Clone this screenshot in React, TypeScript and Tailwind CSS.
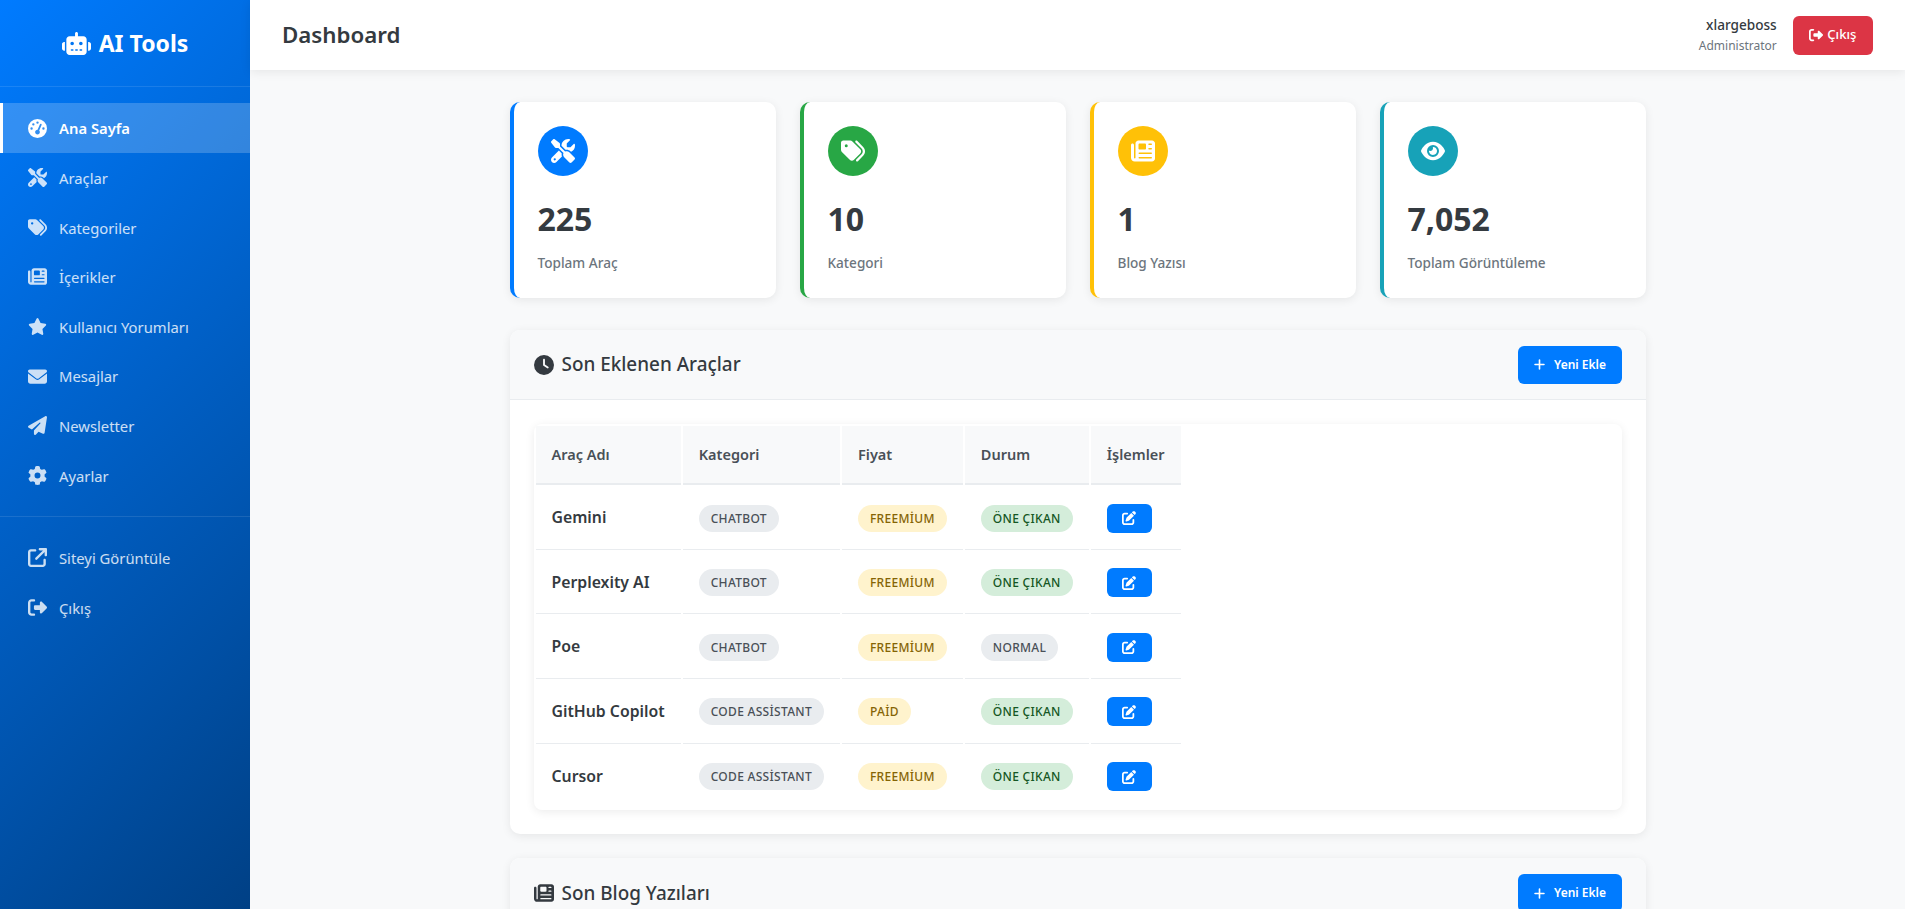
import React from 'react';
import {
  FaRobot, FaGaugeHigh, FaScrewdriverWrench, FaTags, FaNewspaper, FaStar, FaEnvelope, FaPaperPlane,
  FaGear, FaArrowUpRightFromSquare, FaRightFromBracket, FaEye, FaClock, FaPlus, FaPenToSquare,
} from 'react-icons/fa6';

const navItems = [
  { label: 'Ana Sayfa', icon: FaGaugeHigh, active: true },
  { label: 'Araçlar', icon: FaScrewdriverWrench },
  { label: 'Kategoriler', icon: FaTags },
  { label: 'İçerikler', icon: FaNewspaper },
  { label: 'Kullanıcı Yorumları', icon: FaStar },
  { label: 'Mesajlar', icon: FaEnvelope },
  { label: 'Newsletter', icon: FaPaperPlane },
  { label: 'Ayarlar', icon: FaGear },
];

const stats = [
  { value: '225', label: 'Toplam Araç', icon: FaScrewdriverWrench, border: 'border-[#007bff]', bg: 'bg-[#007bff]' },
  { value: '10', label: 'Kategori', icon: FaTags, border: 'border-[#28a745]', bg: 'bg-[#28a745]' },
  { value: '1', label: 'Blog Yazısı', icon: FaNewspaper, border: 'border-[#ffc107]', bg: 'bg-[#ffc107]' },
  { value: '7,052', label: 'Toplam Görüntüleme', icon: FaEye, border: 'border-[#17a2b8]', bg: 'bg-[#17a2b8]' },
];

const tools = [
  { name: 'Gemini', category: 'CHATBOT', price: 'FREEMİUM', status: 'ÖNE ÇIKAN' },
  { name: 'Perplexity AI', category: 'CHATBOT', price: 'FREEMİUM', status: 'ÖNE ÇIKAN' },
  { name: 'Poe', category: 'CHATBOT', price: 'FREEMİUM', status: 'NORMAL' },
  { name: 'GitHub Copilot', category: 'CODE ASSİSTANT', price: 'PAİD', status: 'ÖNE ÇIKAN' },
  { name: 'Cursor', category: 'CODE ASSİSTANT', price: 'FREEMİUM', status: 'ÖNE ÇIKAN' },
];

const NavLink = ({ label, icon: Icon, active }: { label: string; icon: React.ElementType; active?: boolean }) => (
  <a
    className={`flex h-[49.6px] items-center border-l-[3px] px-6 text-[14.8px] ${
      active ? 'border-white bg-white/20 font-semibold text-white' : 'border-transparent text-white/80'
    }`}
  >
    <span className="mr-3 flex w-5 justify-center">
      <Icon size={19} />
    </span>
    <span className="pt-[2px] leading-[23.6px]">{label}</span>
  </a>
);

const Badge = ({ text, tone }: { text: string; tone: string }) => (
  <span className={`inline-block rounded-[20px] px-3 py-[5px] text-[12px] leading-[17px] font-medium tracking-[0.3px] ${tone}`}>
    {text}
  </span>
);

const SectionHeader = ({ title, icon: Icon }: { title: string; icon: React.ElementType }) => (
  <div className="flex items-center justify-between border-b border-[#e9ecef] bg-[#f8f9fa] px-6 pt-4 pb-[15px]">
    <h2 className="flex items-center gap-2 text-[18.9px] leading-[29px] font-medium text-[#343a40]">
      <Icon size={20} />
      {title}
    </h2>
    <button className="flex h-[38px] items-center gap-2 rounded-md bg-[#007bff] px-[15.5px] text-[12px] font-semibold text-white">
      <FaPlus size={13} />
      Yeni Ekle
    </button>
  </div>
);

export default function App() {
  return (
    <div className="flex h-screen overflow-hidden bg-[#f8f9fa] font-['Noto_Sans','Open_Sans',sans-serif] text-[#343a40]">
      {/* Sidebar */}
      <aside className="w-[250px] shrink-0 bg-[linear-gradient(135deg,#007bff,#004085)] text-white">
        <div className="flex items-center justify-center gap-2 border-b border-white/10 p-6 text-[23px] leading-[38.4px] font-bold">
          <FaRobot size={29} />
          AI Tools
        </div>
        <nav className="pt-4">
          {navItems.map((item) => (
            <NavLink key={item.label} {...item} />
          ))}
          <div className="my-4 border-t border-white/10" />
          <NavLink label="Siteyi Görüntüle" icon={FaArrowUpRightFromSquare} />
          <NavLink label="Çıkış" icon={FaRightFromBracket} />
        </nav>
      </aside>

      <div className="min-w-0 flex-1">
        {/* Header */}
        <header className="flex h-[70px] items-center justify-between bg-white px-8 shadow-[0_2px_10px_rgba(0,0,0,0.08)]">
          <h1 className="text-[22.3px] font-semibold text-[#343a40]">Dashboard</h1>
          <div className="flex items-center gap-4">
            <div className="text-right">
              <div className="text-[13.6px] leading-[21px] font-medium">xlargeboss</div>
              <div className="text-[12px] leading-[21px] text-[#6c757d]">Administrator</div>
            </div>
            <button className="flex h-[39px] items-center gap-1 rounded-md bg-[#dc3545] px-[16.5px] text-[13.2px] font-medium text-white">
              <FaRightFromBracket size={14} />
              Çıkış
            </button>
          </div>
        </header>

        <main className="mx-auto max-w-[1200px] p-8">
          {/* Stat cards */}
          <div className="mb-8 grid grid-cols-4 gap-6">
            {stats.map((stat) => (
              <div
                key={stat.label}
                className={`rounded-[10px] border-l-4 bg-white px-6 pt-6 pb-[23px] shadow-[0_2px_10px_rgba(0,0,0,0.08)] ${stat.border}`}
              >
                <div className={`mb-[17px] flex h-[50px] w-[50px] items-center justify-center rounded-full text-white ${stat.bg}`}>
                  <stat.icon size={24} />
                </div>
                <div className="text-[32px] leading-[51.2px] font-bold text-[#343a40]">{stat.value}</div>
                <div className="mt-2 text-[13.6px] leading-[22.4px] font-medium text-[#6c757d]">{stat.label}</div>
              </div>
            ))}
          </div>

          {/* Son Eklenen Araçlar */}
          <section className="mb-6 overflow-hidden rounded-[10px] bg-white shadow-[0_2px_10px_rgba(0,0,0,0.08)]">
            <SectionHeader title="Son Eklenen Araçlar" icon={FaClock} />
            <div className="p-6">
              <div className="overflow-hidden rounded-lg bg-white shadow-[0_2px_10px_rgba(0,0,0,0.08)]">
                <table className="border-separate border-spacing-[2px] text-left">
                  <thead>
                    <tr>
                      {['Araç Adı', 'Kategori', 'Fiyat', 'Durum', 'İşlemler'].map((head) => (
                        <th
                          key={head}
                          className="border-b-2 border-[#e9ecef] bg-[#f8f9fa] p-4 text-[14.5px] leading-[25.6px] font-semibold whitespace-nowrap text-[#495057]"
                        >
                          {head}
                        </th>
                      ))}
                    </tr>
                  </thead>
                  <tbody>
                    {tools.map((tool, i) => (
                      <tr key={tool.name}>
                        <td className={`h-[62.6px] p-4 text-[15.8px] font-semibold whitespace-nowrap text-[#343a40] ${i < 4 ? 'border-b border-[#e9ecef]' : ''}`}>
                          {tool.name}
                        </td>
                        <td className={`p-4 whitespace-nowrap ${i < 4 ? 'border-b border-[#e9ecef]' : ''}`}>
                          <Badge text={tool.category} tone="bg-[#e9ecef] text-[#495057]" />
                        </td>
                        <td className={`p-4 whitespace-nowrap ${i < 4 ? 'border-b border-[#e9ecef]' : ''}`}>
                          <Badge text={tool.price} tone="bg-[#fff3cd] text-[#856404]" />
                        </td>
                        <td className={`p-4 whitespace-nowrap ${i < 4 ? 'border-b border-[#e9ecef]' : ''}`}>
                          <Badge
                            text={tool.status}
                            tone={tool.status === 'NORMAL' ? 'bg-[#e9ecef] text-[#495057]' : 'bg-[#d4edda] text-[#155724]'}
                          />
                        </td>
                        <td className={`p-4 whitespace-nowrap ${i < 4 ? 'border-b border-[#e9ecef]' : ''}`}>
                          <button className="flex h-[29px] w-[45px] items-center justify-center rounded-md bg-[#007bff] text-white">
                            <FaPenToSquare size={14} />
                          </button>
                        </td>
                      </tr>
                    ))}
                  </tbody>
                </table>
              </div>
            </div>
          </section>

          {/* Son Blog Yazıları */}
          <section className="overflow-hidden rounded-[10px] bg-white shadow-[0_2px_10px_rgba(0,0,0,0.08)]">
            <SectionHeader title="Son Blog Yazıları" icon={FaNewspaper} />
          </section>
        </main>
      </div>
    </div>
  );
}
